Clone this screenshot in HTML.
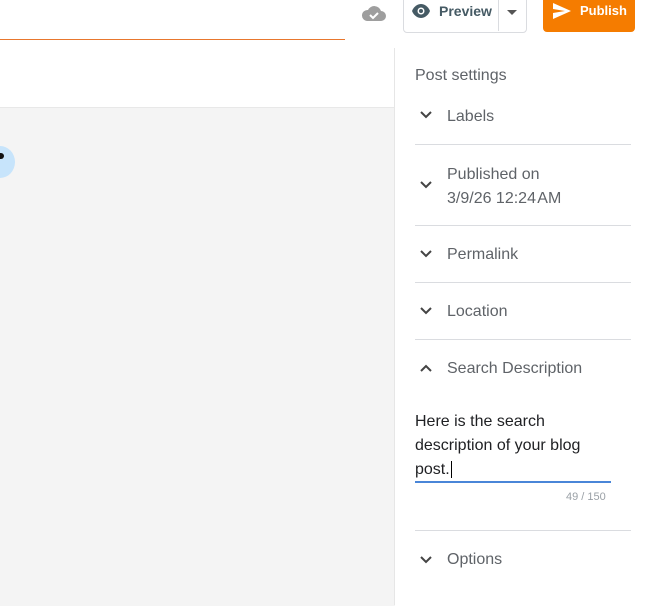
<!DOCTYPE html>
<html><head><style>
body{margin:0;width:651px;height:605px;overflow:hidden;background:#fff;font-family:"Liberation Sans",sans-serif;position:relative}
.a{position:absolute}
.t{color:#5f6368;font-size:16px}
.hr{position:absolute;left:415px;width:216px;height:1px;background:#dadce0}
.chev{position:absolute;left:419px}
</style></head><body>
<div class="a" style="left:0;top:39px;width:345px;height:1px;background:#e8772e"></div>
<div class="a" style="left:0;top:107px;width:395px;height:498px;background:#f4f4f4;border-top:1px solid #e8e8e8"></div>
<div class="a" style="left:-15px;top:146px;width:30px;height:32px;border-radius:50%;background:#c7e4fb"></div>
<div class="a" style="left:0;top:153px;width:4px;height:6px;background:#111;border-radius:0 3px 3px 0"></div>
<div class="a" style="left:394px;top:48px;width:1px;height:557px;background:#e6e6e6"></div>
<svg class="a" style="left:361px;top:3px" width="26" height="20" viewBox="0 0 26 20"><path d="M6 18h14a5 5 0 0 0 0-10 7 7 0 0 0-13-1 5.5 5.5 0 0 0-1 11z" fill="#9e9e9e"/><path d="M9 12l3 3 5-5" stroke="#fff" stroke-width="2" fill="none"/></svg>
<div class="a" style="left:403px;top:-2px;width:122px;height:33px;border:1px solid #dadce0;border-radius:0 0 4px 4px"></div>
<div class="a" style="left:498px;top:0;width:1px;height:31px;background:#dadce0"></div>
<svg class="a" style="left:411px;top:3px" width="20" height="16" viewBox="0 0 20 16"><path d="M1 8C3 3 7 1 10 1s7 2 9 7c-2 5-6 7-9 7S3 13 1 8z" fill="#455a64"/><circle cx="10" cy="8" r="3.5" fill="#fff"/><circle cx="10" cy="8" r="2" fill="#455a64"/></svg>
<div class="a" style="left:439px;top:3px;font-size:14px;font-weight:bold;color:#455a64">Preview</div>
<div class="a" style="left:507px;top:10px;width:0;height:0;border-left:5px solid transparent;border-right:5px solid transparent;border-top:5px solid #555"></div>
<div class="a" style="left:543px;top:-2px;width:92px;height:34px;background:#f57c00;border-radius:0 0 4px 4px"></div>
<svg class="a" style="left:552px;top:2px" width="20" height="18" viewBox="0 0 20 18"><path d="M1 1l18 8-18 8 0-6 12-2-12-2z" fill="#fff"/></svg>
<div class="a" style="left:580px;top:3px;font-size:13px;font-weight:bold;color:#fff">Publish</div>
<div class="a t" style="left:415px;top:67px;font-size:16px">Post settings</div>
<svg class="chev" style="top:110px" width="14" height="10" viewBox="0 0 14 10"><path d="M2 2l5 5 5-5" stroke="#444" stroke-width="2" fill="none"/></svg>
<div class="a t" style="left:447px;top:108px">Labels</div>
<div class="hr" style="top:144px"></div>
<svg class="chev" style="top:180px" width="14" height="10" viewBox="0 0 14 10"><path d="M2 2l5 5 5-5" stroke="#444" stroke-width="2" fill="none"/></svg>
<div class="a t" style="left:447px;top:163px;line-height:24px">Published on<br>3/9/26 12:24&#8202;AM</div>
<div class="hr" style="top:225px"></div>
<svg class="chev" style="top:249px" width="14" height="10" viewBox="0 0 14 10"><path d="M2 2l5 5 5-5" stroke="#444" stroke-width="2" fill="none"/></svg>
<div class="a t" style="left:447px;top:246px">Permalink</div>
<div class="hr" style="top:282px"></div>
<svg class="chev" style="top:306px" width="14" height="10" viewBox="0 0 14 10"><path d="M2 2l5 5 5-5" stroke="#444" stroke-width="2" fill="none"/></svg>
<div class="a t" style="left:447px;top:303px">Location</div>
<div class="hr" style="top:339px"></div>
<svg class="chev" style="top:363px" width="14" height="10" viewBox="0 0 14 10"><path d="M2 8l5-5 5 5" stroke="#444" stroke-width="2" fill="none"/></svg>
<div class="a t" style="left:447px;top:360px">Search Description</div>
<div class="a" style="left:415px;top:410px;font-size:16px;line-height:24px;color:#202124">Here is the search<br>description of your blog<br>post.<span style="border-left:1px solid #000;margin-left:1px"></span></div>
<div class="a" style="left:415px;top:481px;width:196px;height:2px;background:#4a86d8"></div>
<div class="a" style="left:566px;top:491px;font-size:11px;color:#9aa0a6">49 / 150</div>
<div class="hr" style="top:530px"></div>
<svg class="chev" style="top:555px" width="14" height="10" viewBox="0 0 14 10"><path d="M2 2l5 5 5-5" stroke="#444" stroke-width="2" fill="none"/></svg>
<div class="a t" style="left:447px;top:551px">Options</div>
</body></html>
